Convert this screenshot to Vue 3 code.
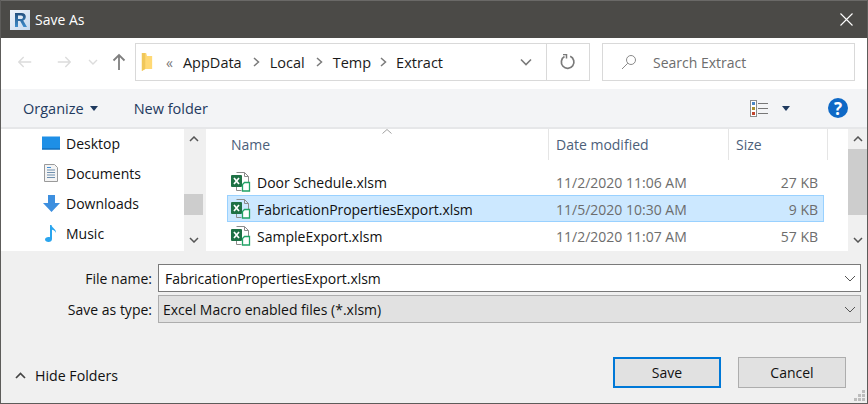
<template>
  <div class="dialog">
    <div class="titlebar">
      <svg class="app-icon" width="20" height="20" viewBox="0 0 20 20">
        <defs>
          <linearGradient id="rv" x1="0" y1="0" x2="1" y2="1">
            <stop offset="0" stop-color="#eef3fa" />
            <stop offset="1" stop-color="#c6d9ee" />
          </linearGradient>
          <linearGradient id="rl" x1="0" y1="0" x2="0" y2="1">
            <stop offset="0" stop-color="#234f7d" />
            <stop offset="1" stop-color="#3d8ccb" />
          </linearGradient>
        </defs>
        <rect width="20" height="20" fill="url(#rv)" />
        <path d="M5 3h6.500c2.800 0 4.300 1.500 4.300 3.800 0 2-1.100 3.200-2.600 3.700L17 17h-3.500l-3.300-6H8v6H5zM8 5.400V9h3c1.300 0 2-.7 2-1.800S12.300 5.400 11 5.400z" fill="url(#rl)" />
      </svg>
      <span class="title">Save As</span>
      <svg class="close" width="13" height="13" viewBox="0 0 13 13"><path d="M.5.500l12 12M12.500.500l-12 12" stroke="#fff" stroke-width="1.100" fill="none" /></svg>
    </div>

    <div class="toolbar">
      <div class="nav-btns">
        <svg width="16" height="14" viewBox="0 0 18 14"><path d="M16 7H2M7.500 1.500L2 7l5.500 5.500" stroke="#dcdcdc" stroke-width="1.600" fill="none" /></svg>
        <svg width="16" height="14" viewBox="0 0 18 14"><path d="M2 7h14M10.500 1.500L16 7l-5.500 5.500" stroke="#dcdcdc" stroke-width="1.600" fill="none" /></svg>
        <svg width="10" height="6" viewBox="0 0 10 6"><path d="M1 1l4 4 4-4" stroke="#dcdcdc" stroke-width="1.400" fill="none" /></svg>
        <svg width="14" height="18" viewBox="0 0 14 18"><path d="M7 17V2M1.500 7.500L7 2l5.500 5.500" stroke="#7f7f7f" stroke-width="1.800" fill="none" /></svg>
      </div>
      <div class="address">
        <svg class="folder" width="12" height="18" viewBox="0 0 14 18" preserveAspectRatio="none">
          <path d="M1 0h5l1 3h6v13H5l-4 2z" fill="#ffd975" />
          <path d="M1 0h4v16l-4 2z" fill="#f0c75a" />
        </svg>
        <span class="chev-left">«</span>
        <span class="crumb">AppData</span>
        <svg class="sep" width="7" height="10" viewBox="0 0 7 10"><path d="M1 1l4.500 4L1 9" stroke="#7a7a7a" stroke-width="1.500" fill="none" /></svg>
        <span class="crumb">Local</span>
        <svg class="sep" width="7" height="10" viewBox="0 0 7 10"><path d="M1 1l4.500 4L1 9" stroke="#7a7a7a" stroke-width="1.500" fill="none" /></svg>
        <span class="crumb">Temp</span>
        <svg class="sep sep-last" width="7" height="10" viewBox="0 0 7 10"><path d="M1 1l4.500 4L1 9" stroke="#7a7a7a" stroke-width="1.500" fill="none" /></svg>
        <span class="crumb">Extract</span>
        <span class="spacer"></span>
        <div class="addr-drop">
          <svg width="12" height="8" viewBox="0 0 12 8"><path d="M1 1.500l5 5 5-5" stroke="#7a7a7a" stroke-width="1.600" fill="none" /></svg>
        </div>
        <div class="addr-refresh">
          <svg width="16" height="16" viewBox="0 0 16 16"><path d="M10.200 2.300A6.300 6.300 0 1 1 4.500 2.600" stroke="#7a7a7a" stroke-width="1.700" fill="none" /><path d="M3 .5h3.500v4" stroke="#7a7a7a" stroke-width="1.500" fill="none" /></svg>
        </div>
      </div>
      <div class="search">
        <svg width="16" height="16" viewBox="0 0 16 16"><circle cx="10" cy="6" r="4.500" stroke="#8a8a8a" fill="none" /><path d="M6.800 9.200L1 15" stroke="#8a8a8a" fill="none" /></svg>
        <span>Search Extract</span>
      </div>
    </div>

    <div class="commands">
      <span class="cmd">Organize</span>
      <span class="caret"></span>
      <span class="cmd new-folder">New folder</span>
      <span class="spacer"></span>
      <svg class="views" width="18" height="17" viewBox="0 0 18 17">
        <rect x=".5" y=".5" width="6" height="16" fill="#fff" stroke="#8c8c8c" />
        <rect x="2" y="2" width="3" height="3" fill="#4a86c5" />
        <rect x="2" y="7" width="3" height="3" fill="#a8902f" />
        <rect x="2" y="12" width="3" height="3" fill="#c2452d" />
        <path d="M8 3.500h10M8 8.500h10M8 13.500h10" stroke="#777" fill="none" />
      </svg>
      <span class="caret view-caret"></span>
      <span class="help">?</span>
    </div>

    <div class="browser">
      <div class="tree">
        <div v-for="place in places" :key="place.name" class="tree-item">
          <span class="tree-icon">
            <svg v-if="place.name === 'Desktop'" width="18" height="14" viewBox="0 0 18 14"><rect width="18" height="13" y=".5" fill="#1e8fe6" /><rect y="12.500" width="18" height="1" fill="#0a5fa8" /></svg>
            <svg v-else-if="place.name === 'Documents'" width="14" height="18" viewBox="0 0 14 18"><path d="M.5.500h10l3 3v14H.500z" fill="#f4f4f4" stroke="#9a9a9a" /><path d="M3 6h8M3 8.500h8M3 11h8M3 13.500h8" stroke="#6f8fae" fill="none" /><path d="M3 3.500h4" stroke="#3f8fd8" fill="none" /></svg>
            <svg v-else-if="place.name === 'Downloads'" width="17" height="17" viewBox="0 0 17 17"><path d="M5 0h7v8h5l-8.500 9L0 8h5z" fill="#3d8fdf" /></svg>
            <svg v-else width="12" height="17" viewBox="0 0 12 17"><path d="M5 0h1.500c.3 3 5 4 4.500 8-.5-1.700-2.500-3-4-3.200V14c0 1.700-1.500 3-3.500 3S0 16 0 14.500 1.500 12 3.500 12c.6 0 1.100.1 1.500.3z" fill="#2aa5ee" /></svg>
          </span>
          <span>{{ place.name }}</span>
        </div>
      </div>
      <div class="scrollbar tree-scroll">
        <svg class="arrow" width="10" height="6" viewBox="0 0 10 6"><path d="M1 5l4-4 4 4" stroke="#555" stroke-width="1.500" fill="none" /></svg>
        <div class="thumb"></div>
        <svg class="arrow" width="10" height="6" viewBox="0 0 10 6"><path d="M1 1l4 4 4-4" stroke="#555" stroke-width="1.500" fill="none" /></svg>
      </div>
      <div class="files">
        <div class="file-head">
          <span class="col-name">Name</span>
          <span class="col-date">Date modified</span>
          <span class="col-size">Size</span>
          <svg class="sort" width="10" height="5" viewBox="0 0 10 5"><path d="M.5 4.500L5 .5l4.500 4" stroke="#a0a0a0" fill="none" /></svg>
        </div>
        <div
          v-for="file in files"
          :key="file.name"
          class="file-row"
          :class="{ selected: file.selected }"
        >
          <span class="col-name name-cell">
            <svg class="xl" width="20" height="20" viewBox="0 0 20 20">
              <path d="M5.500.500h8l4 4v6M17.500 4.500h-4v-4M5.500 15v3.500h5" stroke="#8c8c8c" fill="none" />
              <rect y="3" width="11" height="12" rx="1" fill="#1e7145" />
              <path d="M3 6l5 6M8 6l-5 6" stroke="#fff" stroke-width="1.700" fill="none" />
              <path d="M13.500 10.500h5v8.500h-7v-6.500z" fill="#fff" stroke="#21a366" stroke-width="1.300" />
            </svg>
            <span>{{ file.name }}</span>
          </span>
          <span class="col-date">{{ file.date }}</span>
          <span class="col-size size-cell">{{ file.size }}</span>
        </div>
      </div>
      <div class="scrollbar list-scroll">
        <svg class="arrow" width="10" height="6" viewBox="0 0 10 6"><path d="M1 5l4-4 4 4" stroke="#555" stroke-width="1.500" fill="none" /></svg>
        <div class="thumb"></div>
        <svg class="arrow" width="10" height="6" viewBox="0 0 10 6"><path d="M1 1l4 4 4-4" stroke="#555" stroke-width="1.500" fill="none" /></svg>
      </div>
    </div>

    <div class="form">
      <div class="form-row">
        <label>File name:</label>
        <div class="combo editable">
          <span>FabricationPropertiesExport.xlsm</span>
          <svg width="12" height="7" viewBox="0 0 12 7"><path d="M1 1l5 5 5-5" stroke="#555" fill="none" /></svg>
        </div>
      </div>
      <div class="form-row second">
        <label>Save as type:</label>
        <div class="combo">
          <span>Excel Macro enabled files (*.xlsm)</span>
          <svg width="12" height="7" viewBox="0 0 12 7"><path d="M1 1l5 5 5-5" stroke="#555" fill="none" /></svg>
        </div>
      </div>
      <div class="actions">
        <div class="hide-folders">
          <svg width="11" height="7" viewBox="0 0 11 7"><path d="M1 6l4.500-4.500L10 6" stroke="#444" stroke-width="1.700" fill="none" /></svg>
          <span>Hide Folders</span>
        </div>
        <span class="spacer"></span>
        <button class="btn primary">Save</button>
        <button class="btn">Cancel</button>
      </div>
      <svg class="grip" width="11" height="11" viewBox="0 0 11 11" fill="#bdbdbd">
        <rect x="8" y="0" width="3" height="3" />
        <rect x="4" y="4" width="3" height="3" />
        <rect x="8" y="4" width="3" height="3" />
        <rect x="0" y="8" width="3" height="3" />
        <rect x="4" y="8" width="3" height="3" />
        <rect x="8" y="8" width="3" height="3" />
      </svg>
    </div>
  </div>
</template>

<script setup>
const places = [
  { name: 'Desktop' },
  { name: 'Documents' },
  { name: 'Downloads' },
  { name: 'Music' },
]

const files = [
  { name: 'Door Schedule.xlsm', date: '11/2/2020 11:06 AM', size: '27 KB' },
  { name: 'FabricationPropertiesExport.xlsm', date: '11/5/2020 10:30 AM', size: '9 KB', selected: true },
  { name: 'SampleExport.xlsm', date: '11/2/2020 11:07 AM', size: '57 KB' },
]
</script>

<style>
html, body { margin: 0; background: #fff; }
</style>

<style scoped>
.dialog {
  width: 868px;
  height: 404px;
  box-sizing: border-box;
  display: flex;
  flex-direction: column;
  border-left: 1px solid #5d5c5a;
  border-right: 1px solid #5d5c5a;
  border-bottom: 1px solid #5d5c5a;
  font-family: "Open Sans", "Noto Sans", sans-serif;
  font-size: 14px;
  color: #1a1a1a;
  overflow: hidden;
  background: #fff;
}
.spacer { flex: 1; }

.titlebar {
  height: 38px;
  margin: 0 -1px;
  flex: none;
  background: #4b4a47;
  border-top: 1px solid #6a6967;
  box-sizing: border-box;
  display: flex;
  align-items: center;
  padding: 0 15px 0 10px;
  color: #fff;
}
.app-icon { margin-right: 5px; }
.title { flex: 1; font-size: 14px; }

.toolbar {
  height: 51px;
  flex: none;
  display: flex;
  padding-top: 5px;
  box-sizing: border-box;
}
.nav-btns {
  width: 134px;
  flex: none;
  display: flex;
  align-items: center;
  padding: 0 0 8px 16px;
  box-sizing: border-box;
}
.nav-btns svg:nth-child(2) { margin-left: 23px; }
.nav-btns svg:nth-child(3) { margin-left: 16px; }
.nav-btns svg:nth-child(4) { margin-left: 14px; }
.address {
  width: 455px;
  height: 38px;
  box-sizing: border-box;
  border: 1px solid #d9d9d9;
  display: flex;
  align-items: center;
  padding-left: 5px;
  font-size: 14.5px;
}
.folder { margin-right: 13px; }
.chev-left { color: #777; margin-right: 10px; font-size: 14px; }
.sep { margin: 0 10px 0 11px; }
.sep-last { margin: 0 9px; }
.addr-drop {
  width: 42px;
  height: 100%;
  display: flex;
  align-items: center;
  justify-content: center;
  border-right: 1px solid #d9d9d9;
  box-sizing: border-box;
}
.addr-refresh {
  width: 42px;
  display: flex;
  align-items: center;
  justify-content: center;
}
.search {
  width: 253px;
  height: 38px;
  margin-left: 12px;
  box-sizing: border-box;
  border: 1px solid #d9d9d9;
  display: flex;
  align-items: center;
  padding-left: 18px;
  gap: 16px;
  color: #6d6d6d;
}

.commands {
  height: 38px;
  flex: none;
  background: #f3f4f6;
  display: flex;
  align-items: center;
  padding: 0 19px 0 22px;
  color: #1f3a5f;
  font-size: 14.5px;
  border-bottom: 2px solid #e6e7e9;
}
.caret {
  width: 0;
  height: 0;
  border: 4px solid transparent;
  border-top: 5px solid #1f3a5f;
  border-bottom: 0;
  margin-left: 6px;
}
.new-folder { margin-left: 36px; }
.views { margin-right: 14px; }
.view-caret { margin: 0 38px 0 0; }
.help {
  width: 20px;
  height: 20px;
  border-radius: 50%;
  background: #0f69c6;
  color: #fff;
  font-weight: 700;
  font-size: 17px;
  display: flex;
  align-items: center;
  justify-content: center;
  line-height: 1;
}

.browser {
  height: 122px;
  flex: none;
  display: flex;
  background: #fff;
}
.tree { width: 183px; flex: none; margin-top: -1px; }
.tree-item {
  height: 30px;
  display: flex;
  align-items: center;
  padding-left: 40px;
  gap: 5px;
  color: #111;
}
.tree-icon {
  width: 20px;
  display: flex;
  justify-content: center;
}
.scrollbar {
  width: 19px;
  flex: none;
  background: #f0f0f0;
  display: flex;
  flex-direction: column;
  align-items: center;
  position: relative;
}
.arrow { position: absolute; left: 5px; }
.arrow:first-child { top: 7px; }
.arrow:last-child { bottom: 8px; }
.thumb { background: #cdcdcd; width: 100%; }
.tree-scroll .thumb { height: 21px; margin-top: 65px; }
.list-scroll .thumb { height: 66px; margin-top: 20px; }

.files { flex: 1; border-left: 3px solid #f0f0f0; padding-left: 21px; }
.file-head {
  height: 39px;
  display: flex;
  position: relative;
  align-items: flex-start;
  color: #4c607a;
}
.file-head > span {
  height: 31px;
  display: flex;
  align-items: center;
}
.file-head .col-date, .file-head .col-size { border-left: 1px solid #e5e5e5; }
.file-head .col-size { border-right: 1px solid #e5e5e5; }
.sort { position: absolute; left: 155px; top: 0; }
.col-name { width: 321px; flex: none; box-sizing: border-box; padding-left: 4px; }
.col-date { width: 180px; flex: none; box-sizing: border-box; padding-left: 7px; }
.col-size { width: 100px; flex: none; box-sizing: border-box; padding-left: 7px; }
.file-row {
  height: 27px;
  width: 597px;
  box-sizing: border-box;
  border: 1px solid transparent;
  padding-top: 2px;
  display: flex;
  align-items: center;
  color: #6d6d6d;
}
.file-row.selected { background: #cce8ff; border-color: #99d1ff; }
.file-row.selected .name-cell { letter-spacing: -.06px; }
.file-row .col-name { padding-left: 3px; width: 320px; }
.file-row .col-date { padding-left: 8px; }
.name-cell { display: flex; align-items: center; gap: 6px; color: #111; }
.xl { margin-top: -2px; }
.size-cell { width: 93px; padding-right: 3px; text-align: right; }

.form {
  flex: 1;
  background: #f0f0f0;
  position: relative;
  padding-top: 13px;
  min-height: 0;
}
.form-row { display: flex; align-items: center; height: 28px; }
.form-row.second { margin-top: 3px; }
.form-row label { width: 151px; text-align: right; margin-right: 6px; flex: none; color: #111; }
.combo {
  width: 703px;
  height: 28px;
  box-sizing: border-box;
  border: 1px solid #adadad;
  background: #e1e1e1;
  display: flex;
  align-items: center;
  justify-content: space-between;
  padding: 0 2px 0 4px;
  color: #111;
}
.combo svg { margin-right: 2px; }
.combo.editable { background: #fff; border-color: #7a7a7a; padding-left: 6px; letter-spacing: -.06px; }
.actions {
  display: flex;
  align-items: center;
  margin-top: 33px;
  height: 32px;
  padding-right: 21px;
}
.hide-folders { display: flex; align-items: center; gap: 9px; margin: 6px 0 0 14px; color: #111; font-size: 14.2px; }
.btn {
  width: 108px;
  height: 31px;
  box-sizing: border-box;
  border: 1px solid #adadad;
  background: #e1e1e1;
  font: inherit;
  color: #111;
  padding: 0;
  margin-left: 17px;
}
.btn.primary { border: 2px solid #0078d7; }
.grip { position: absolute; right: 2px; bottom: 2px; }
</style>
